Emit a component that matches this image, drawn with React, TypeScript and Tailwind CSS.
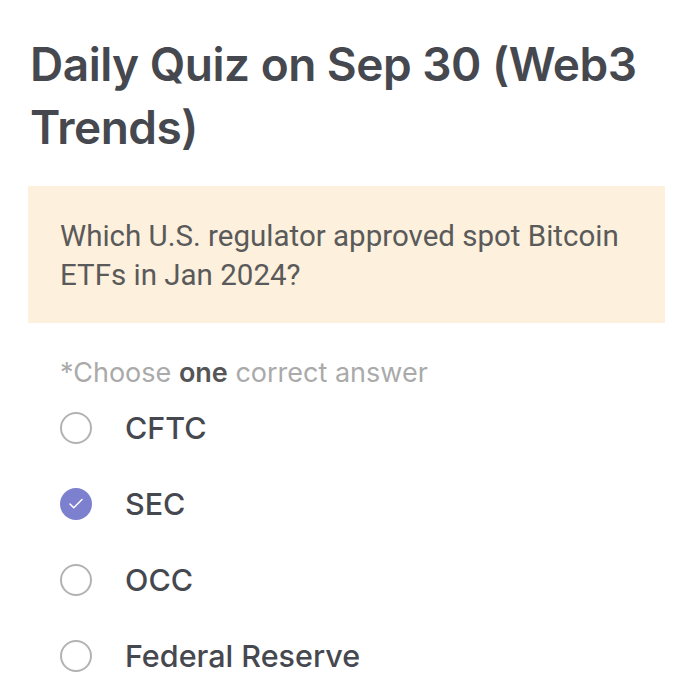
import { Check } from 'lucide-react'

const options = ['CFTC', 'SEC', 'OCC', 'Federal Reserve']

export default function App() {
  const selected = 1
  return (
    <div className="min-h-[699px] w-[690px] bg-white pl-[28px] pr-[25px] pt-[33px] font-['Inter',sans-serif]">
      <h1 className="pl-[2px] text-[46px] font-semibold leading-[63px] tracking-[-0.5px] text-[#46484f]">
        Daily Quiz on Sep 30 (Web3 Trends)
      </h1>
      <div className="mt-[27px] h-[137px] bg-[#fdf0dd] pl-[32px] pr-[20px] pt-[31px] font-['Roboto',sans-serif] text-[29.5px] leading-[39px] text-[#5a5a5a]">
        Which U.S. regulator approved spot Bitcoin ETFs in Jan 2024?
      </div>
      <div className="mt-[34px] px-[32px]">
        <p className="text-[27px] leading-[32px] text-[#aaaaaa]">
          *Choose <span className="font-semibold text-[#555555]">one</span> correct answer
        </p>
        <div className="mt-[1px] flex flex-col">
          {options.map((opt, i) => (
            <div key={opt} className="flex h-[76px] items-center gap-[33px]">
              {i === selected ? (
                <div className="flex h-[32px] w-[32px] items-center justify-center rounded-full bg-[#7c80cf]">
                  <Check size={18} strokeWidth={2} color="#ffffff" />
                </div>
              ) : (
                <div className="h-[32px] w-[32px] rounded-full border-[2px] border-[#b3b3b3]" />
              )}
              <span className="text-[30.5px] font-medium text-[#46484f]">{opt}</span>
            </div>
          ))}
        </div>
      </div>
    </div>
  )
}
